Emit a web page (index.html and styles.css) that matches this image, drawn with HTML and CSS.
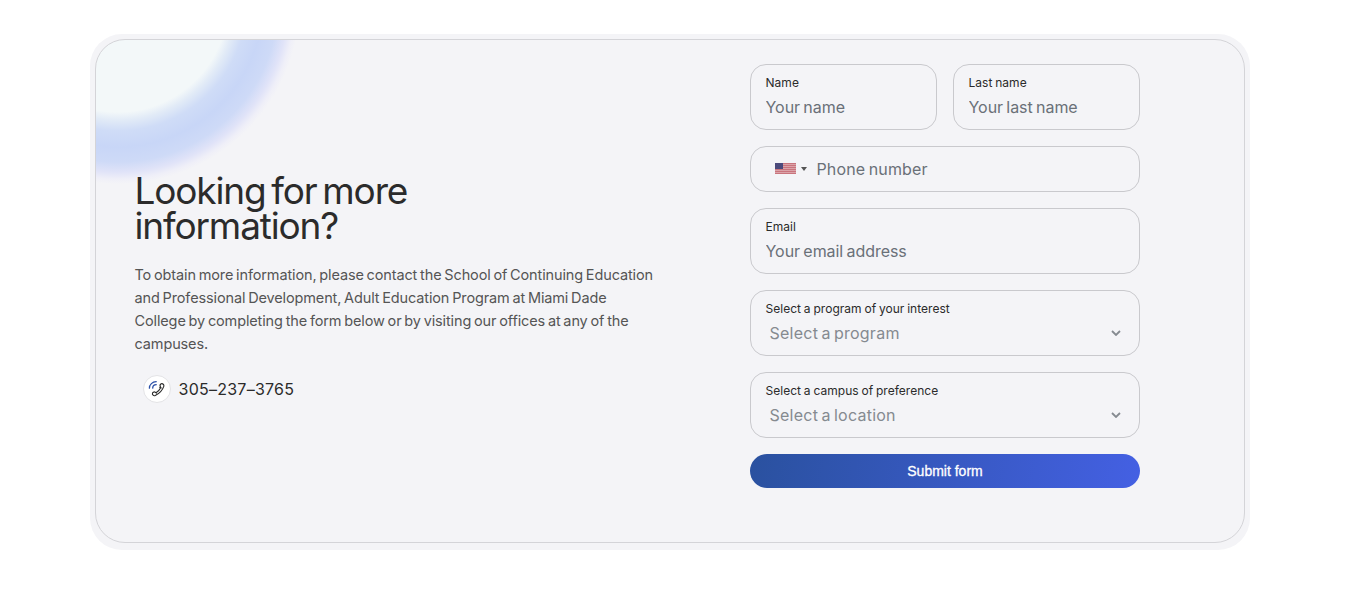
FILE: index.html
```html
<!DOCTYPE html>
<html lang="en">
<head>
  <meta charset="UTF-8">
  <title>Looking for more information?</title>
  <link rel="stylesheet" href="styles.css">
</head>
<body>

<section class="contact">
  <div class="card">

    <!-- Left side -->
    <div class="info">
      <h2>Looking for more<br>information?</h2>
      <p>
        To obtain more information, please contact the School of Continuing Education<br>
        and Professional Development, Adult Education Program at Miami Dade<br>
        College by completing the form below or by visiting our offices at any of the<br>
        campuses.
      </p>
      <a class="phone">
        <span class="phone-icon">
          <svg width="18" height="18" viewBox="0 0 18 18" fill="none" stroke-linecap="round" stroke-linejoin="round">
            <path d="M1.4 8.2C1.4 4.6 4.4 1.8 8.2 1.7M4.7 8.1C4.8 6.1 6.2 4.8 8.2 4.7" stroke="#2b50a8" stroke-width="1.3"/>
            <path d="M13.2 3.8C14.6 3.2 16.4 4.7 15.8 6.4C14.4 10.4 11.3 13.6 7.3 15.5C5.6 16.2 4 14.6 4.5 13.1C4.9 12 6.3 11.8 7.3 12.4L8 12.8C10.2 11.5 11.7 9.9 12.8 7.6L12.4 6.8C11.8 5.7 12.1 4.4 13.2 3.8ZM6.8 11.8L8.4 13.2M11.8 7.4L13.2 8" stroke="#2a2a2a" stroke-width="1.1"/>
          </svg>
        </span>
        <span class="phone-number">305–237–3765</span>
      </a>
    </div>

    <!-- Form -->
    <form class="form">
      <div class="row">
        <div class="field">
          <label for="name">Name</label>
          <input type="text" id="name" placeholder="Your name">
        </div>
        <div class="field">
          <label for="lastname">Last name</label>
          <input type="text" id="lastname" placeholder="Your last name">
        </div>
      </div>

      <div class="field field-phone">
        <svg class="flag" width="21" height="11" viewBox="0 0 21 11">
          <rect width="21" height="11" fill="#dba3a9"/>
          <path d="M0 .5H21M0 2.5H21M0 4.5H21M0 6.5H21M0 8.5H21M0 10.5H21" stroke="#c9747d" stroke-width="1"/>
          <rect width="8" height="6" fill="#4b4a7c"/>
        </svg>
        <span class="caret"></span>
        <input type="tel" placeholder="Phone number">
      </div>

      <div class="field">
        <label for="email">Email</label>
        <input type="email" id="email" placeholder="Your email address">
      </div>

      <div class="field">
        <label>Select a program of your interest</label>
        <div class="select">
          <span>Select a program</span>
          <svg width="10" height="6" viewBox="0 0 10 6" fill="none"><path d="M1 1L5 5L9 1" stroke="#858a90" stroke-width="1.8"/></svg>
        </div>
      </div>

      <div class="field">
        <label>Select a campus of preference</label>
        <div class="select">
          <span>Select a location</span>
          <svg width="10" height="6" viewBox="0 0 10 6" fill="none"><path d="M1 1L5 5L9 1" stroke="#858a90" stroke-width="1.8"/></svg>
        </div>
      </div>

      <button type="button">Submit form</button>
    </form>

  </div>
</section>

</body>
</html>
```
FILE: styles.css
```css
* { box-sizing: border-box; }
body {
  margin: 0;
  background: #fff;
  font-family: Inter, "Open Sans", sans-serif;
  color: #2b2b2b;
}

.contact {
  width: 1160px;
  height: 516px;
  margin: 34px 0 0 90px;
  padding: 5px;
  background: #f4f4f7;
  border-radius: 32px;
}

.card {
  display: flex;
  height: 504px;
  border: 1px solid #d4d4d8;
  border-radius: 30px;
  background: radial-gradient(circle at 22px -38px,
    #f3f8f9 0, #f3f8f9 110px,
    #e2ebf7 118px,
    #cfdcf7 129px,
    #c8d6f7 145px,
    #cedaf7 160px,
    #e0e3f8 170px,
    #efeff8 177px,
    #f4f4f7 182px);
}

.info {
  width: 654px;
  padding: 133px 0 0 38.5px;
}

h2 {
  margin: 0;
  font-size: 37px;
  font-weight: 400;
  line-height: 35px;
  letter-spacing: -1.15px;
  word-spacing: -3.5px;
  white-space: nowrap;
}

p {
  margin: 20px 0 0;
  font-size: 14.5px;
  line-height: 23px;
  letter-spacing: -0.13px;
  word-spacing: -1.1px;
  color: #555;
  white-space: nowrap;
}

.phone {
  display: flex;
  align-items: center;
  gap: 8px;
  margin: 20px 0 0 8px;
}

.phone-icon {
  display: flex;
  align-items: center;
  justify-content: center;
  width: 28px;
  height: 28px;
  border: 1px solid #e3e3e6;
  border-radius: 50%;
  background: #fff;
}

.phone-number {
  font-size: 16px;
  letter-spacing: 0.25px;
}

.form {
  display: flex;
  flex-direction: column;
  gap: 16px;
  width: 390px;
  padding-top: 24px;
}

.row {
  display: grid;
  grid-template-columns: 1fr 1fr;
  gap: 16px;
}

.field {
  height: 66px;
  padding: 10px 14.5px 0;
  border: 1px solid #c9c9cd;
  border-radius: 16px;
  white-space: nowrap;
}

label {
  display: block;
  font-size: 12px;
  line-height: 16px;
  letter-spacing: 0.03px;
  word-spacing: -0.6px;
}

input {
  display: block;
  width: 100%;
  height: 24px;
  margin-top: 4px;
  padding: 0;
  border: none;
  outline: none;
  background: transparent;
  font-family: inherit;
  font-size: 16px;
  letter-spacing: -0.05px;
  word-spacing: -1.1px;
}

input::placeholder { color: #6a7078; opacity: 1; }

.field-phone {
  display: flex;
  align-items: center;
  height: 46px;
  padding: 0 15px 0 24px;
}

.field-phone input {
  margin: 0 0 0 9.5px;
  letter-spacing: 0.13px;
}

.flag { flex: none; margin-top: -1px; }

.caret {
  flex: none;
  margin-left: 5px;
  border: 3px solid transparent;
  border-top: 4px solid #555;
  border-bottom: 0;
}

.select {
  display: flex;
  align-items: center;
  justify-content: space-between;
  height: 24px;
  margin-top: 4px;
  padding: 0 3.5px 0 4px;
  font-size: 16px;
  letter-spacing: 0.25px;
  word-spacing: -1.5px;
  color: #858a90;
}

button {
  height: 34px;
  border: none;
  border-radius: 17px;
  background: linear-gradient(100deg, #2a519f, #4460e3);
  color: #fff;
  font-family: "Liberation Sans", Arial, sans-serif;
  font-size: 14px;
  -webkit-text-stroke: 0.3px #fff;
}
```
